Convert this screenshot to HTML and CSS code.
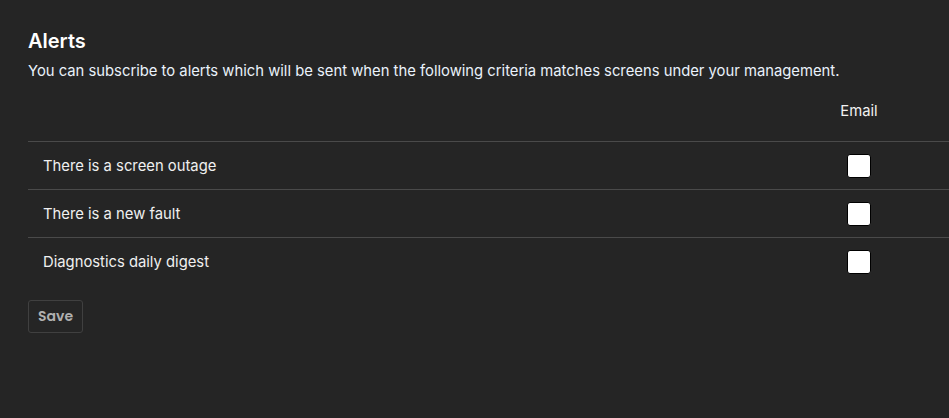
FILE: index.html
```html
<!DOCTYPE html>
<html lang="en">
<head>
<meta charset="utf-8">
<link rel="stylesheet" href="styles.css">
</head>
<body>
<main class="page">
  <h1 class="title">Alerts</h1>
  <p class="desc">You can subscribe to alerts which will be sent when the following criteria matches screens under your management.</p>
  <div class="table">
    <div class="head">
      <span></span>
      <span class="col">Email</span>
      <span></span>
    </div>
    <div class="row">
      <span class="label">There is a screen outage</span>
      <span class="col"><span class="box"></span></span>
      <span></span>
    </div>
    <div class="row">
      <span class="label">There is a new fault</span>
      <span class="col"><span class="box"></span></span>
      <span></span>
    </div>
    <div class="row">
      <span class="label">Diagnostics daily digest</span>
      <span class="col"><span class="box"></span></span>
      <span></span>
    </div>
  </div>
  <button class="save">Save</button>
</main>
</body>
</html>
```
FILE: styles.css
```css
html, body {
  margin: 0;
  background: #252525;
  height: 100%;
}
body {
  font-family: Inter, "Noto Sans", sans-serif;
  color: #f2f2f2;
}
.page {
  padding: 28px 0 0 28px;
}
.title {
  margin: 0;
  font-size: 20px;
  font-weight: 600;
  line-height: 26px;
  color: #ffffff;
}
.desc {
  margin: 6px 0 0 0;
  font-size: 14.8px;
  line-height: 22px;
  color: #eaf2fb;
}
.table {
  margin-top: 20px;
}
.head, .row {
  display: grid;
  grid-template-columns: 1fr 100px 40px;
  align-items: center;
}
.head {
  height: 39px;
  font-size: 14.8px;
  align-items: start;
}
.row {
  height: 47px;
  border-top: 1px solid #4a4a4a;
  font-size: 14.8px;
}
.label {
  padding-left: 15px;
  color: #f0f0f0;
}
.col {
  display: flex;
  justify-content: center;
}
.box {
  width: 22px;
  height: 22px;
  background: #ffffff;
  border: 1px solid #000;
  border-radius: 3px;
}
.save {
  margin-top: 15px;
  height: 33px;
  padding: 0 9px;
  background: transparent;
  border: 1px solid #404040;
  border-radius: 3px;
  color: #b0b0b0;
  font-family: Poppins, Inter, sans-serif;
  font-weight: 600;
  font-size: 14px;
}
```
